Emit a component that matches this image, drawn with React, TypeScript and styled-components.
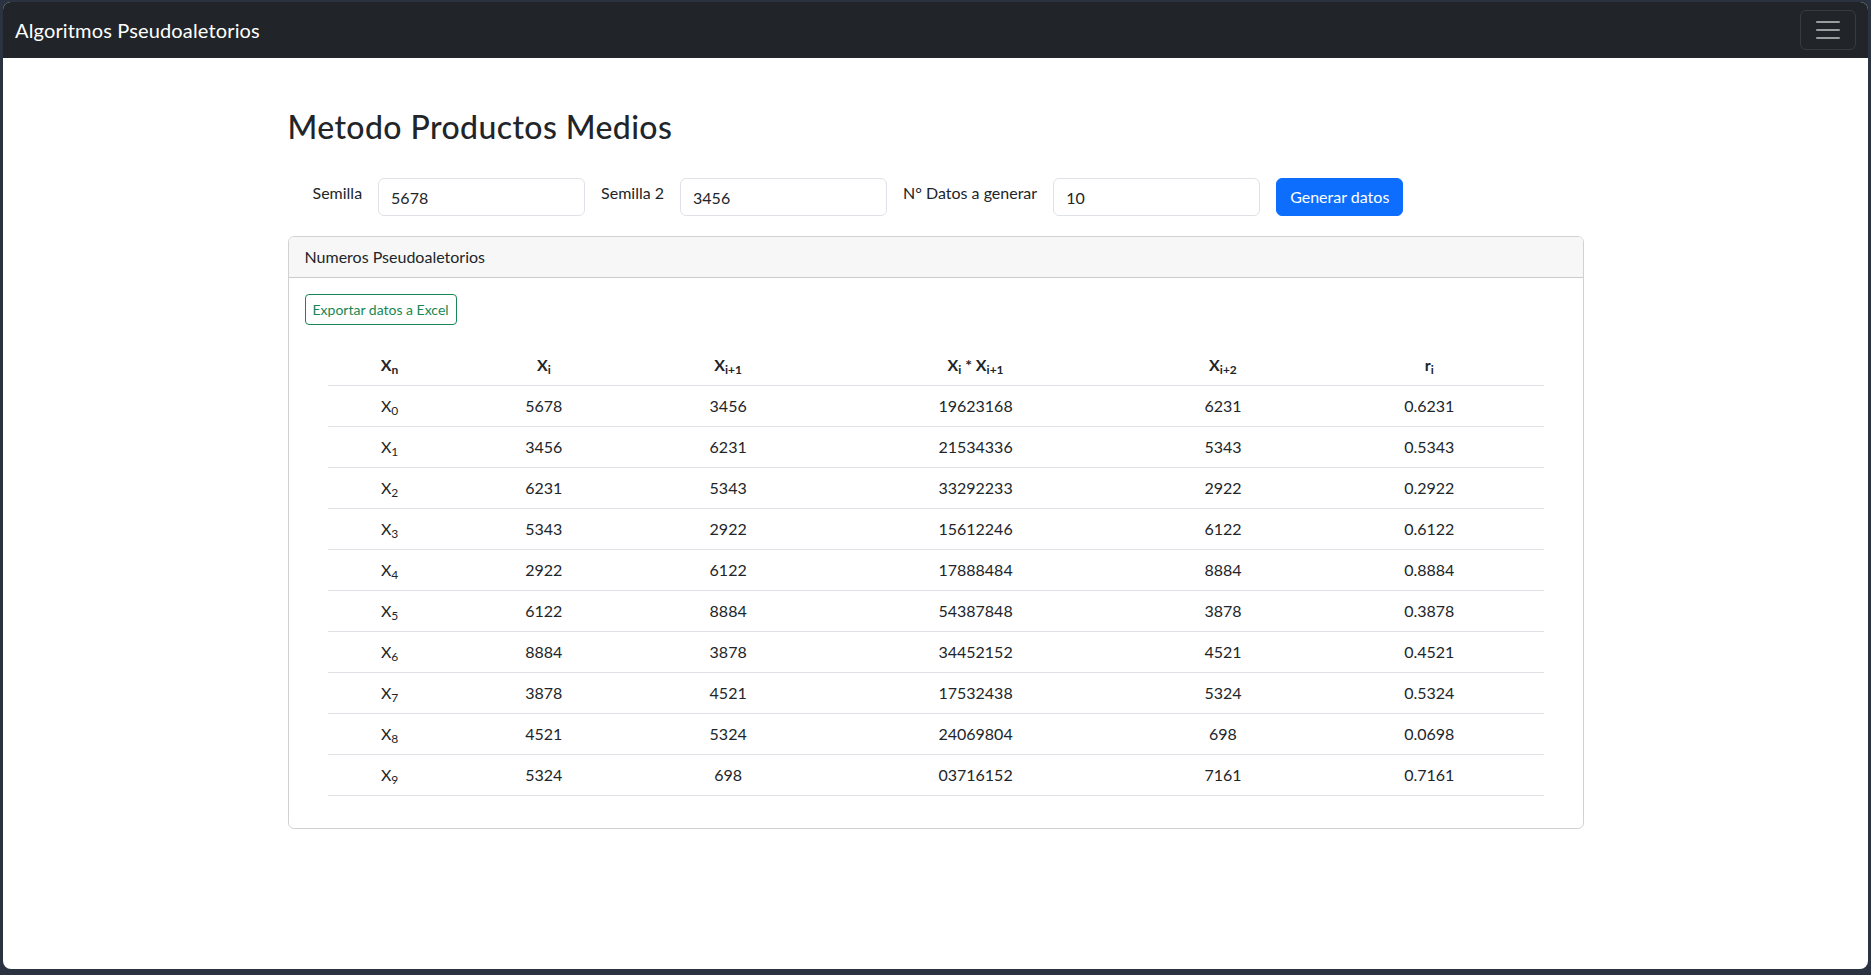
import React from "react";
import styled, { createGlobalStyle } from "styled-components";

const GlobalStyle = createGlobalStyle`
  html, body {
    margin: 0;
    padding: 0;
    background: #2b3340;
  }
  body {
    font-family: Lato, "Open Sans", "Liberation Sans", sans-serif;
    color: #212529;
    font-size: 16px;
  }
  * { box-sizing: border-box; }
`;

const Frame = styled.div`
  margin: 2px 3px 0;
  height: 967px;
  background: #fff;
  border-radius: 8px;
  overflow: hidden;
`;

const Navbar = styled.nav`
  height: 56px;
  background: #212529;
  display: flex;
  align-items: center;
  justify-content: space-between;
  padding: 0 12px;
`;

const Brand = styled.span`
  color: #fff;
  font-size: 20px;
  line-height: 30px;
  letter-spacing: 0.15px;
`;

const Toggler = styled.button`
  width: 56px;
  height: 40px;
  background: transparent;
  border: 1px solid rgba(255, 255, 255, 0.1);
  border-radius: 6px;
  display: flex;
  align-items: center;
  justify-content: center;
  padding: 0;
`;

const Container = styled.main`
  width: 1296px;
  margin: 50px auto 0;
`;

const Title = styled.h2`
  margin: 0;
  font-size: 32px;
  font-weight: 500;
  line-height: 1.2;
  letter-spacing: 0.4px;
`;

const FormRow = styled.form`
  display: flex;
  align-items: flex-start;
  gap: 16px;
  margin-top: 32px;
  padding-left: 25px;
`;

const Label = styled.label`
  font-size: 16px;
  line-height: 24px;
  padding-top: 3px;
`;

const Input = styled.input`
  width: 207px;
  height: 38px;
  border: 1px solid #dee2e6;
  border-radius: 6px;
  padding: 6px 12px;
  font-family: inherit;
  font-size: 16px;
  color: #212529;
  background: #fff;
  outline: none;
`;

const PrimaryButton = styled.button`
  height: 38px;
  padding: 6px 13px;
  border: 1px solid #0d6efd;
  background: #0d6efd;
  color: #fff;
  border-radius: 6px;
  font-family: inherit;
  font-size: 16px;
  line-height: 24px;
`;

const Card = styled.section`
  margin-top: 20px;
  border: 1px solid rgba(0, 0, 0, 0.175);
  border-radius: 6px;
  overflow: hidden;
`;

const CardHeader = styled.div`
  background: #f7f7f7;
  border-bottom: 1px solid rgba(0, 0, 0, 0.175);
  padding: 8px 16px;
  line-height: 24px;
  font-size: 16px;
`;

const CardBody = styled.div`
  padding: 16px;
`;

const OutlineButton = styled.button`
  height: 31px;
  padding: 4px 7px;
  border: 1px solid #198754;
  color: #198754;
  background: #fff;
  border-radius: 4px;
  font-family: inherit;
  font-size: 14px;
  line-height: 21px;
`;

const TableWrap = styled.div`
  margin: 20px 0 16px;
  padding: 0 23px;
`;

const Table = styled.table`
  width: 100%;
  border-collapse: collapse;
  table-layout: fixed;
  text-align: center;
  font-size: 16px;
  color: #212529;

  sub {
    font-size: 0.75em;
    line-height: 0;
    position: relative;
    vertical-align: baseline;
    bottom: -0.25em;
  }
`;

const Th = styled.th<{ $w: number }>`
  width: ${(p) => p.$w}px;
  padding: 8px;
  line-height: 24px;
  font-weight: 700;
  border-bottom: 1px solid #dee2e6;
`;

const Td = styled.td`
  padding: 8px;
  line-height: 24px;
  border-bottom: 1px solid #dee2e6;
`;

const rows: [string, string, string, string, string][] = [
  ["5678", "3456", "19623168", "6231", "0.6231"],
  ["3456", "6231", "21534336", "5343", "0.5343"],
  ["6231", "5343", "33292233", "2922", "0.2922"],
  ["5343", "2922", "15612246", "6122", "0.6122"],
  ["2922", "6122", "17888484", "8884", "0.8884"],
  ["6122", "8884", "54387848", "3878", "0.3878"],
  ["8884", "3878", "34452152", "4521", "0.4521"],
  ["3878", "4521", "17532438", "5324", "0.5324"],
  ["4521", "5324", "24069804", "698", "0.0698"],
  ["5324", "698", "03716152", "7161", "0.7161"],
];

export default function App() {
  return (
    <>
      <GlobalStyle />
      <Frame>
        <Navbar>
          <Brand>Algoritmos Pseudoaletorios</Brand>
          <Toggler type="button" aria-label="menu">
            <svg width="30" height="30" viewBox="0 0 30 30">
              <path
                d="M4 7h22M4 15h22M4 23h22"
                stroke="rgba(255,255,255,0.55)"
                strokeWidth="2"
                strokeLinecap="round"
              />
            </svg>
          </Toggler>
        </Navbar>
        <Container>
          <Title>Metodo Productos Medios</Title>
          <FormRow onSubmit={(e) => e.preventDefault()}>
            <Label>Semilla</Label>
            <Input defaultValue="5678" />
            <Label>Semilla 2</Label>
            <Input defaultValue="3456" />
            <Label>N° Datos a generar</Label>
            <Input defaultValue="10" />
            <PrimaryButton type="button">Generar datos</PrimaryButton>
          </FormRow>
          <Card>
            <CardHeader>Numeros Pseudoaletorios</CardHeader>
            <CardBody>
              <OutlineButton type="button">Exportar datos a Excel</OutlineButton>
              <TableWrap>
                <Table>
                  <thead>
                    <tr>
                      <Th $w={124}>X<sub>n</sub></Th>
                      <Th $w={184}>X<sub>i</sub></Th>
                      <Th $w={184}>X<sub>i+1</sub></Th>
                      <Th $w={310}>X<sub>i</sub> * X<sub>i+1</sub></Th>
                      <Th $w={184}>X<sub>i+2</sub></Th>
                      <Th $w={228}>r<sub>i</sub></Th>
                    </tr>
                  </thead>
                  <tbody>
                    {rows.map((r, i) => (
                      <tr key={i}>
                        <Td>X<sub>{i}</sub></Td>
                        {r.map((v, j) => (
                          <Td key={j}>{v}</Td>
                        ))}
                      </tr>
                    ))}
                  </tbody>
                </Table>
              </TableWrap>
            </CardBody>
          </Card>
        </Container>
      </Frame>
    </>
  );
}
